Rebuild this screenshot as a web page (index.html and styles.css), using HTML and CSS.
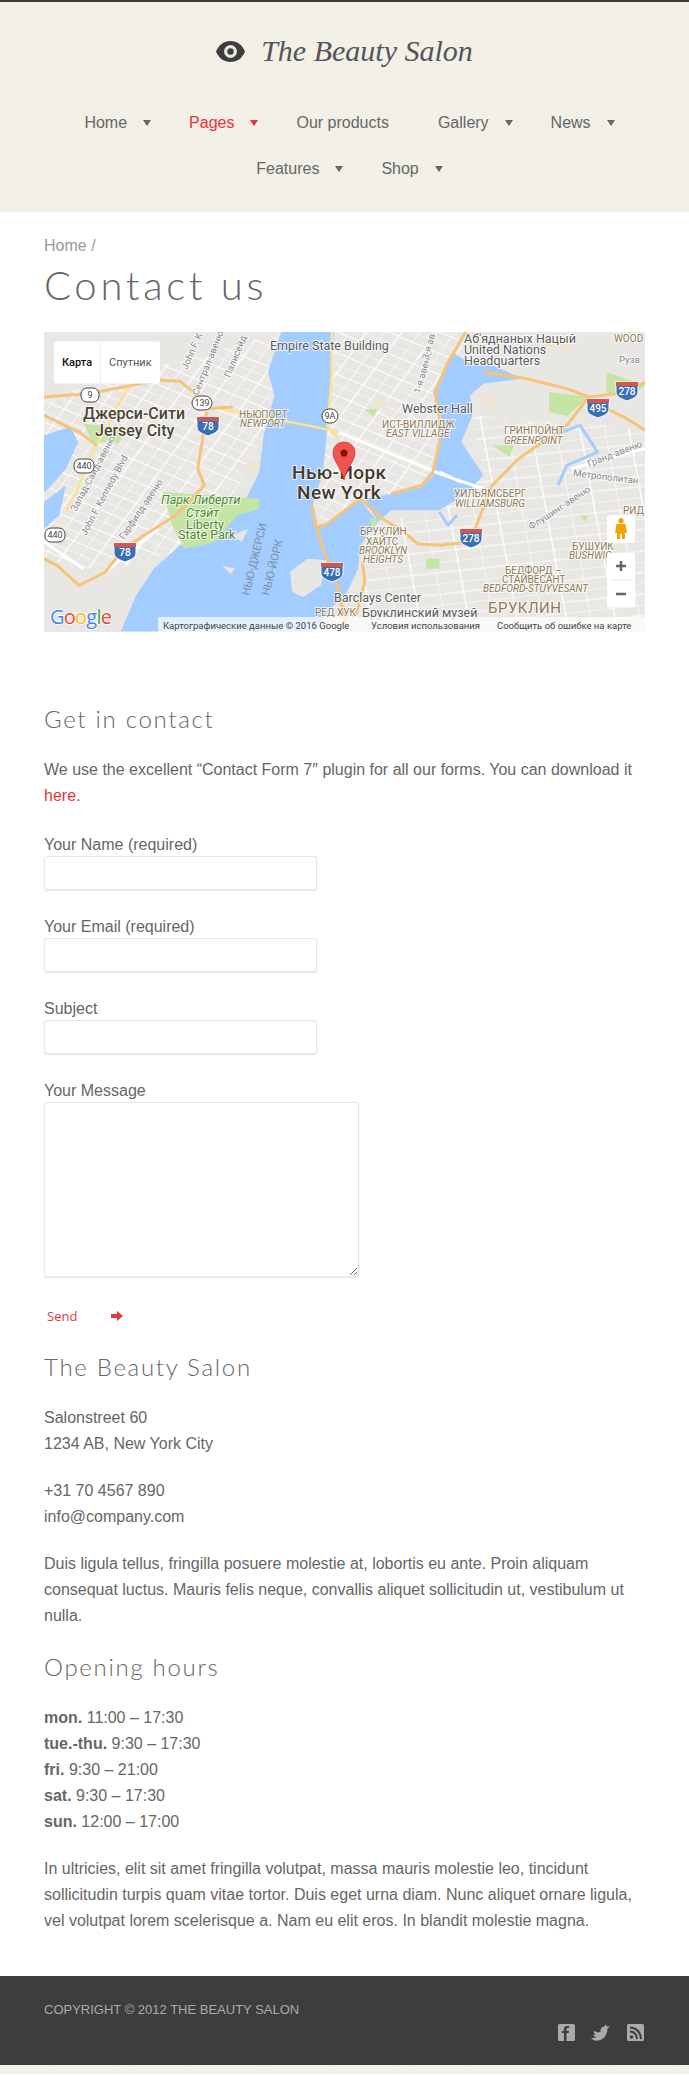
FILE: index.html
```html
<!DOCTYPE html>
<html lang="en">
<head>
  <meta charset="UTF-8">
  <title>Contact us - The Beauty Salon</title>
  <link rel="stylesheet" href="styles.css">
</head>
<body>
  <header class="site-header">
    <div class="logo">
      <svg class="logo-eye" width="29" height="21" viewBox="0 0 29 21">
        <path d="M0 10.5C3 3.500 8 0 14.500 0S26 3.500 29 10.500C26 17.500 21 21 14.500 21S3 17.500 0 10.500Z" fill="#3d3d3d"/>
        <circle cx="14.500" cy="10.500" r="6.500" fill="#e9e7df"/>
        <circle cx="14.500" cy="10.500" r="3.200" fill="#3d3d3d"/>
      </svg>
      <span class="logo-text">The Beauty Salon</span>
    </div>
    <nav class="main-nav">
      <a class="nav-item" href="#">Home<i class="caret"></i></a>
      <a class="nav-item active" href="#">Pages<i class="caret"></i></a>
      <a class="nav-item plain" href="#">Our products</a>
      <a class="nav-item" href="#">Gallery<i class="caret"></i></a>
      <a class="nav-item" href="#">News<i class="caret"></i></a>
      <a class="nav-item" href="#">Features<i class="caret"></i></a>
      <a class="nav-item" href="#">Shop<i class="caret"></i></a>
    </nav>
  </header>

  <main class="content">
    <div class="breadcrumb">Home /</div>
    <h1>Contact us</h1>

    <div class="map">
      <svg width="601" height="300" viewBox="0 0 601 300">
        <defs>
          <pattern id="grid-a" width="70" height="56" patternUnits="userSpaceOnUse" patternTransform="rotate(29)">
            <path d="M0 0H70M0 28H70M0 0V56M35 0V56" stroke="#fff" stroke-width="3" fill="none"/>
          </pattern>
          <pattern id="grid-b" width="110" height="64" patternUnits="userSpaceOnUse" patternTransform="rotate(-8)">
            <path d="M0 0H110M0 32H110M0 0V64M55 0V64" stroke="#fff" stroke-width="3" fill="none"/>
          </pattern>
          <g id="interstate">
            <path d="M-11 -9H11V1C11 6 5 8 0 10C-5 8 -11 6 -11 1Z" fill="#3b6fb5" stroke="#fff"/>
            <rect x="-11" y="-9" width="22" height="4" fill="#d9534f"/>
          </g>
        </defs>

        <!-- shapes traced from the map, in 3x crop coordinates -->
        <rect width="601" height="300" fill="#e8e7e4"/>
        <g transform="translate(-44 -3.300) scale(.4394 .3333)">
          <path class="grid" fill="url(#grid-a)" d="M760,10 H1060 L1000,340 L960,475 L820,515 L740,585 L712,530 L745,300Z"/>
          <path class="grid" fill="url(#grid-b)" d="M1075,260 L1468,300 V908 H800 L860,580 L1000,545 L1100,440Z"/>
          <path class="grid" fill="url(#grid-a)" d="M100,210 L640,10 L600,320 L480,640 L240,730 L100,690Z"/>
          <path class="block" d="M1100,205H1130V240H1100ZM1240,30H1300V60H1240ZM560,400H600V430H560ZM850,210H880V240H850ZM1050,390H1090V420H1050Z"/>

          <path class="water" d="M640,10 L610,130 L625,200 L600,320 L590,430 L560,510 L480,640 L410,650 L350,720 L310,800 L275,908 L710,908 L760,830 L790,790 L815,720 L820,650 L860,580 L820,515 L740,585 L722,590 L712,530 L735,430 L745,300 L752,150 L760,10Z"/>
          <path class="water" d="M1030,70 L985,190 L1005,270 L1000,340 L985,440 L960,475 L890,495 L830,510 L860,580 L890,545 L1000,545 L1060,495 L1100,440 L1050,340 L1075,260 L1070,200 L1100,165 L1190,150 L1120,110 L1075,110Z"/>
          <path class="water" d="M100,320 L160,295 L178,340 L150,420 L110,480 L100,490Z"/>
          <path class="water" d="M100,520 L150,470 L135,560 L100,600Z"/>
          <path class="water-line" d="M1240,330 L1320,290 L1360,370 L1290,410 L1270,470M1000,550 L1020,590 L1040,560"/>
          <path class="land" d="M660,730 L700,690 L745,695 L730,770 L690,805 L665,790ZM530,620 L565,600 L550,640ZM505,710 L535,720 L525,735Z"/>
          <path class="park" d="M370,490 L590,510 L590,540 L540,560 L490,640 L420,660 L395,600Z"/>
          <path class="park" d="M1250,190 L1340,205 L1290,262 L1250,250ZM1380,130 L1468,170 L1430,210 L1380,190ZM190,285 L290,300 L270,345 L210,340ZM1120,350 L1170,350 L1160,385ZM970,690 L1000,690 L1000,720 L970,720ZM840,570 L860,570 L850,600ZM830,240 L860,240 L850,265ZM1320,560 L1340,560 L1330,580Z"/>
          <path class="road-white" d="M770,310 L1010,440 L1100,480M1000,430 L1050,460M100,640 L190,720M240,730 L360,600M1300,420 L1468,360"/>
          <path class="road-yellow" d="M500,240 L620,270 L700,290 L770,310M755,10 L755,150 L745,290 L772,335M150,550 L180,470 L220,350 L290,180"/>
          <path class="road" d="M100,205 L200,195 L300,170 L365,155 L410,158 L440,190 L470,240 L530,235M470,250 L460,340 L450,420 L465,470 L400,560 L340,610 L280,660 L240,730 L180,770 L130,710 L100,690"/>
          <path class="road" d="M1060,10 L1020,100 L990,190 L1000,270 L1000,340 L985,430 L960,470 L890,495"/>
          <path class="road" d="M1468,160 L1430,190 L1340,205 L1290,180 L1200,150 L1100,130M1340,205 L1290,290 L1180,390 L1120,470 L1090,570 L1070,640 L1000,650 L950,645 L920,610 L870,570 L820,510 L740,590 L720,595 L710,530M720,595 L735,660 L770,780 L790,908M1380,240 L1420,265 L1468,305M825,700 L830,760 L810,860M100,260 L180,310 L220,350"/>
        </g>

        <!-- street names -->
        <text class="lb-road" transform="rotate(-66 143 38)" x="143" y="38">John F. K</text>
        <text class="lb-road" transform="rotate(-68 154 64)" x="154" y="64">Сентрал-авеню</text>
        <text class="lb-road" transform="rotate(-68 186 46)" x="186" y="46">Палисейд</text>
        <text class="lb-road" transform="rotate(-62 32 180)" x="32" y="180">Запад-Сайд-авеню</text>
        <text class="lb-road" transform="rotate(-62 42 204)" x="42" y="204">John F. Kennedy Blvd</text>
        <text class="lb-road" transform="rotate(-56 80 208)" x="80" y="208">Гарфилд-авеню</text>
        <text class="lb-road" transform="rotate(-74 376 62)" x="376" y="62">1-я авеню</text>
        <text class="lb-road" transform="rotate(-74 384 28)" x="384" y="28">3-я ав</text>
        <text class="lb-road" transform="rotate(-21 545 135)" x="545" y="135">Гранд-авеню</text>
        <text class="lb-road" transform="rotate(7 529 144)" x="529" y="144">Метрополитан</text>
        <text class="lb-road" transform="rotate(-33 487 198)" x="487" y="198">Флушинг-авеню</text>
        <text class="lb-water" transform="rotate(-76 205 264)" x="205" y="264">НЬЮ-ДЖЕРСИ</text>
        <text class="lb-water" transform="rotate(-76 225 264)" x="225" y="264">НЬЮ-ЙОРК</text>

        <!-- districts -->
        <text class="lb-area" x="195" y="86">НЬЮПОРТ</text>
        <text class="lb-area lb-it" x="196" y="95">NEWPORT</text>
        <text class="lb-area" x="338" y="96">ИСТ-ВИЛЛИДЖ</text>
        <text class="lb-area lb-it" x="342" y="105">EAST VILLAGE</text>
        <text class="lb-area" x="460" y="102">ГРИНПОЙНТ</text>
        <text class="lb-area lb-it" x="460" y="112">GREENPOINT</text>
        <text class="lb-area" x="410" y="165">УИЛЬЯМСБЕРГ</text>
        <text class="lb-area lb-it" x="411" y="175">WILLIAMSBURG</text>
        <text class="lb-area" x="316" y="203">БРУКЛИН</text>
        <text class="lb-area" x="322" y="213">ХАЙТС</text>
        <text class="lb-area lb-it" x="315" y="222">BROOKLYN</text>
        <text class="lb-area lb-it" x="319" y="231">HEIGHTS</text>
        <text class="lb-area" x="528" y="218">БУШУИК</text>
        <text class="lb-area lb-it" x="525" y="227">BUSHWIC</text>
        <text class="lb-area" x="579" y="182">РИД</text>
        <text class="lb-area" x="461" y="242">БЕДФОРД –</text>
        <text class="lb-area" x="458" y="251">СТАЙВЕСАНТ</text>
        <text class="lb-area lb-it" x="439" y="260">BEDFORD-STUYVESANT</text>
        <text class="lb-area" x="271" y="284">РЕД ХУК</text>
        <text class="lb-area" x="570" y="10">WOOD</text>
        <text class="lb-road" x="575" y="31">Рузв</text>

        <!-- places -->
        <text class="lb-poi" x="226" y="18">Empire State Building</text>
        <text class="lb-poi" x="420" y="11">Аб'яднаных Нацый</text>
        <text class="lb-poi" x="420" y="22">United Nations</text>
        <text class="lb-poi" x="420" y="33">Headquarters</text>
        <text class="lb-poi" x="358" y="81">Webster Hall</text>
        <text class="lb-poi" x="290" y="270">Barclays Center</text>
        <text class="lb-poi" x="318" y="285">Бруклинский музей</text>
        <text class="lb-boro" x="444" y="281">БРУКЛИН</text>
        <text class="lb-city" x="39" y="87">Джерси-Сити</text>
        <text class="lb-city" x="51" y="104">Jersey City</text>
        <text class="lb-nyc" x="248" y="147">Нью-Йорк</text>
        <text class="lb-nyc" x="253" y="167">New York</text>
        <text class="lb-park lb-it" x="117" y="172">Парк Либерти</text>
        <text class="lb-park lb-it" x="142" y="185">Стэйт</text>
        <text class="lb-park" x="142" y="197">Liberty</text>
        <text class="lb-park" x="134" y="207">State Park</text>

        <!-- shields -->
        <g transform="translate(164 94)"><use href="#interstate"/><text class="shield" y="4">78</text></g>
        <g transform="translate(81 220)"><use href="#interstate"/><text class="shield" y="4">78</text></g>
        <g transform="translate(288 240)"><use href="#interstate"/><text class="shield" y="4">478</text></g>
        <g transform="translate(427 206)"><use href="#interstate"/><text class="shield" y="4">278</text></g>
        <g transform="translate(583 59)"><use href="#interstate"/><text class="shield" y="4">278</text></g>
        <g transform="translate(554 76)"><use href="#interstate"/><text class="shield" y="4">495</text></g>
        <g transform="translate(46 63)"><rect class="oval" x="-9" y="-7" width="18" height="14" rx="6"/><text class="shield-dark" y="3">9</text></g>
        <g transform="translate(158 71)"><rect class="oval" x="-10" y="-7" width="20" height="14" rx="7"/><text class="shield-dark" y="3">139</text></g>
        <g transform="translate(286 84)"><rect class="oval" x="-8" y="-7" width="16" height="14" rx="7"/><text class="shield-dark" y="3">9A</text></g>
        <g transform="translate(40 134)"><rect class="oval" x="-10" y="-7" width="20" height="14" rx="6"/><text class="shield-dark" y="3">440</text></g>
        <g transform="translate(11 203)"><rect class="oval" x="-10" y="-7" width="20" height="14" rx="6"/><text class="shield-dark" y="3">440</text></g>

        <!-- marker -->
        <path d="M300 110C293 110 289 115 289 121C289 129 297 135 300 148C303 135 311 129 311 121C311 115 307 110 300 110Z" fill="#f0544c" stroke="#c5221f" stroke-width=".6"/>
        <circle cx="300" cy="121" r="3.500" fill="#7a1410"/>

        <!-- controls -->
        <rect class="ctl" x="10" y="9.500" width="106" height="42" rx="2"/>
        <path d="M56.500 9.500V51.500" stroke="#eee"/>
        <text class="ctl-on" x="18" y="34">Карта</text>
        <text class="ctl-off" x="65" y="34">Спутник</text>
        <rect class="ctl" x="563" y="183" width="28" height="28" rx="2"/>
        <path d="M577 186a2.800 2.800 0 1 1-.01 0ZM572.500 192H581.500L583 201H581V207H578V202H576V207H573V201H571Z" fill="#f0a500"/>
        <rect class="ctl" x="563" y="221" width="28" height="54.500" rx="2"/>
        <path d="M567 248H587" stroke="#e6e6e6"/>
        <path d="M577 229V239M572 234H582M572 262H582" stroke="#666" stroke-width="2.500"/>

        <!-- footer strip and logo -->
        <rect class="attr-bg" x="114" y="285" width="487" height="15"/>
        <text class="attr" x="119" y="297">Картографические данные © 2016 Google</text>
        <text class="attr" x="327" y="297">Условия использования</text>
        <text class="attr" x="453" y="297">Сообщить об ошибке на карте</text>
        <text class="g-logo" x="6" y="292" textLength="62"><tspan fill="#4285f4">G</tspan><tspan fill="#ea4335">o</tspan><tspan fill="#fbbc05">o</tspan><tspan fill="#4285f4">g</tspan><tspan fill="#34a853">l</tspan><tspan fill="#ea4335">e</tspan></text>
      </svg>
    </div>

    <h3 class="first">Get in contact</h3>
    <p>We use the excellent “Contact Form 7″ plugin for all our forms. You can download it <a class="link" href="#">here</a>.</p>

    <form class="contact-form">
      <label class="field">Your Name (required)<input type="text"></label>
      <label class="field">Your Email (required)<input type="text"></label>
      <label class="field">Subject<input type="text"></label>
      <label class="field">Your Message<textarea></textarea></label>
      <button class="send" type="button">Send
        <svg width="12" height="10" viewBox="0 0 12 10"><path d="M0 3H6V0L12 5L6 10V7H0Z" fill="#e03a3a"/></svg>
      </button>
    </form>

    <h3>The Beauty Salon</h3>
    <p>Salonstreet 60<br>1234 AB, New York City</p>
    <p>+31 70 4567 890<br>info@company.com</p>
    <p>Duis ligula tellus, fringilla posuere molestie at, lobortis eu ante. Proin aliquam consequat luctus. Mauris felis neque, convallis aliquet sollicitudin ut, vestibulum ut nulla.</p>

    <h3>Opening hours</h3>
    <p><b>mon.</b> 11:00 – 17:30<br><b>tue.-thu.</b> 9:30 – 17:30<br><b>fri.</b> 9:30 – 21:00<br><b>sat.</b> 9:30 – 17:30<br><b>sun.</b> 12:00 – 17:00</p>
    <p>In ultricies, elit sit amet fringilla volutpat, massa mauris molestie leo, tincidunt sollicitudin turpis quam vitae tortor. Duis eget urna diam. Nunc aliquet ornare ligula, vel volutpat lorem scelerisque a. Nam eu elit eros. In blandit molestie magna.</p>
  </main>

  <footer class="site-footer">
    <div class="copyright">Copyright © 2012 The Beauty Salon</div>
    <div class="social">
      <svg width="17" height="17" viewBox="0 0 17 17"><rect width="17" height="17" rx="1.500" fill="#aaa"/><path d="M6 17V9H4V7H6V5C6 3 7 2 9 2H11V4H9.500C8.800 4 8.500 4.300 8.500 5V7H11L10.600 9H8.500V17Z" fill="#3d3d3d"/></svg>
      <svg width="20" height="17" viewBox="0 0 20 17"><path d="M0 14C2 14 4 14 5 13C3 12.500 2 11.500 2.500 10.500C3.500 10.800 4 10.500 4.500 10.300C3 9.500 2.500 8.500 3 7C6 8.500 8 8.500 9.500 8C9 5 11 2 13.500 2.500L15 0L15.500 2.500L19 2L16.500 4.500C16.500 10 13 16 7 16.500C4 17 1.500 16 0 14Z" fill="#aaa"/></svg>
      <svg width="17" height="17" viewBox="0 0 17 17"><rect width="17" height="17" rx="1.500" fill="#aaa"/><circle cx="4.500" cy="13" r="1.800" fill="#3d3d3d"/><path d="M3 7.500C7 7.500 10 10.500 10 15M3 3.500C9 3.500 14 8.500 14 15" fill="none" stroke="#3d3d3d" stroke-width="2"/></svg>
    </div>
  </footer>
  <div class="page-end"></div>
</body>
</html>
```

FILE: styles.css
```css
body {
  margin: 0;
  background: #fff;
  color: #666;
  font-family: "Liberation Sans", Arial, sans-serif;
  font-size: 16px;
  line-height: 26px;
}

.site-header,
.page-end {
  background-color: #f1efe6;
  background-image: repeating-linear-gradient(45deg, rgba(255, 255, 255, 0.15) 0 1px, transparent 1px 3px);
}

.site-header {
  border-top: 2px solid #3d3d3d;
  height: 210px;
}

.logo {
  display: flex;
  justify-content: center;
  align-items: center;
  gap: 16px;
  height: 98px;
}

.logo-eye {
  flex: none;
}

.logo-text {
  font-family: "Liberation Serif", serif;
  font-style: italic;
  font-size: 30px;
  color: #555;
  white-space: nowrap;
}

.main-nav {
  display: flex;
  flex-wrap: wrap;
  justify-content: center;
  column-gap: 38px;
  padding: 0 40px 0 50px;
}

.nav-item {
  display: flex;
  align-items: center;
  gap: 16px;
  height: 46px;
  color: #666;
  text-decoration: none;
}

.nav-item.plain {
  padding-right: 11px;
}

.nav-item.active {
  color: #e5333a;
}

.caret {
  width: 0;
  height: 0;
  border-style: solid;
  border-width: 6px 4.500px 0;
  border-color: #666 transparent transparent;
}

.active .caret {
  border-top-color: #e5333a;
}

.content {
  padding: 21px 44px 0;
}

.breadcrumb {
  color: #999;
}

h1 {
  margin: 0 0 21px;
  font-family: Lato, sans-serif;
  font-weight: 300;
  font-size: 40px;
  line-height: 52px;
  letter-spacing: 3.700px;
  color: #666;
}

h3 {
  margin: 23px 0;
  font-family: Lato, sans-serif;
  font-weight: 300;
  font-size: 24px;
  line-height: 30px;
  letter-spacing: 1.700px;
  color: #666;
}

h3.first {
  margin-top: 72px;
}

p {
  margin: 0 0 21px;
}

.link {
  color: #e5333a;
  text-decoration: none;
}

.map {
  height: 300px;
  width: 601px;
}

.map svg {
  display: block;
}

/* map shapes */
.block { fill: #f0e4d3; }
.water { fill: #a3ccff; }
.land { fill: #e8e7e4; }
.park { fill: #c5e5a5; }

.water-line,
.road,
.road-white,
.road-yellow {
  fill: none;
  vector-effect: non-scaling-stroke;
  stroke-linejoin: round;
}

.water-line { stroke: #a3ccff; stroke-width: 3; }
.road-white { stroke: #fff; stroke-width: 3; }
.road-yellow { stroke: #fde293; stroke-width: 2.500; }
.road { stroke: #f6c37a; stroke-width: 3; }

/* map labels */
.map text {
  font-family: Roboto, sans-serif;
  paint-order: stroke;
  stroke: rgba(255, 255, 255, 0.75);
  stroke-width: 2px;
}

.map .lb-road { font-size: 9.500px; fill: #888; }
.map .lb-water { font-size: 11px; fill: #7d92a8; stroke: none; }
.map .lb-area { font-size: 10px; fill: #8f7a55; }
.map .lb-it { font-style: italic; }
.map .lb-poi { font-size: 12.500px; fill: #5b5b5b; }
.map .lb-boro { font-size: 15px; letter-spacing: 0.500px; fill: #8f7a55; }
.map .lb-city { font-size: 16px; font-weight: 500; fill: #4d4433; }
.map .lb-nyc { font-size: 19px; font-weight: 500; letter-spacing: 0.400px; fill: #44392a; }
.map .lb-park { font-size: 12.500px; fill: #4e8a2f; }
.map .shield { font-size: 10px; font-weight: 500; fill: #fff; stroke: none; text-anchor: middle; }
.map .shield-dark { font-size: 9px; fill: #444; stroke: none; text-anchor: middle; }
.map .ctl-on { font-size: 11px; font-weight: 500; fill: #111; stroke: none; }
.map .ctl-off { font-size: 11px; fill: #565656; stroke: none; }
.map .attr { font-size: 9.500px; fill: #444; stroke: none; }
.map .g-logo { font-family: "Open Sans", sans-serif; font-size: 20px; stroke: #fff; stroke-width: 1.500px; }

.oval {
  fill: #fff;
  stroke: #444;
}

.ctl {
  fill: #fff;
}

.attr-bg {
  fill: rgba(255, 255, 255, 0.7);
}

/* form */
.contact-form {
  display: flex;
  flex-direction: column;
  align-items: flex-start;
  margin-top: 24px;
}

.field {
  display: block;
  height: 82px;
  line-height: 23px;
}

.field input,
.field textarea {
  display: block;
  box-sizing: border-box;
  width: 273px;
  height: 34px;
  margin: 0;
  padding: 4px 6px;
  background: #fff;
  border: 1px solid #e6e6e6;
  border-radius: 3px;
  box-shadow: 0 1px 2px rgba(0, 0, 0, 0.1);
}

.field:has(textarea) {
  height: auto;
}

.field textarea {
  width: 315px;
  height: 175px;
}

.send {
  display: flex;
  align-items: center;
  gap: 34px;
  height: 20px;
  margin: 29px 0 3px;
  padding: 0 3px;
  background: none;
  border: none;
  font-family: "Open Sans", sans-serif;
  font-size: 13px;
  color: #e03a3a;
}

.site-footer {
  margin-top: 42px;
  height: 89px;
  box-sizing: border-box;
  padding: 21px 45px 0 44px;
  background: #3d3d3d;
  color: #aaa;
}

.copyright {
  font-size: 13px;
  line-height: 26px;
  text-transform: uppercase;
}

.social {
  display: flex;
  justify-content: flex-end;
  gap: 16px;
  margin-top: 1px;
}

.page-end {
  height: 9px;
}
```
